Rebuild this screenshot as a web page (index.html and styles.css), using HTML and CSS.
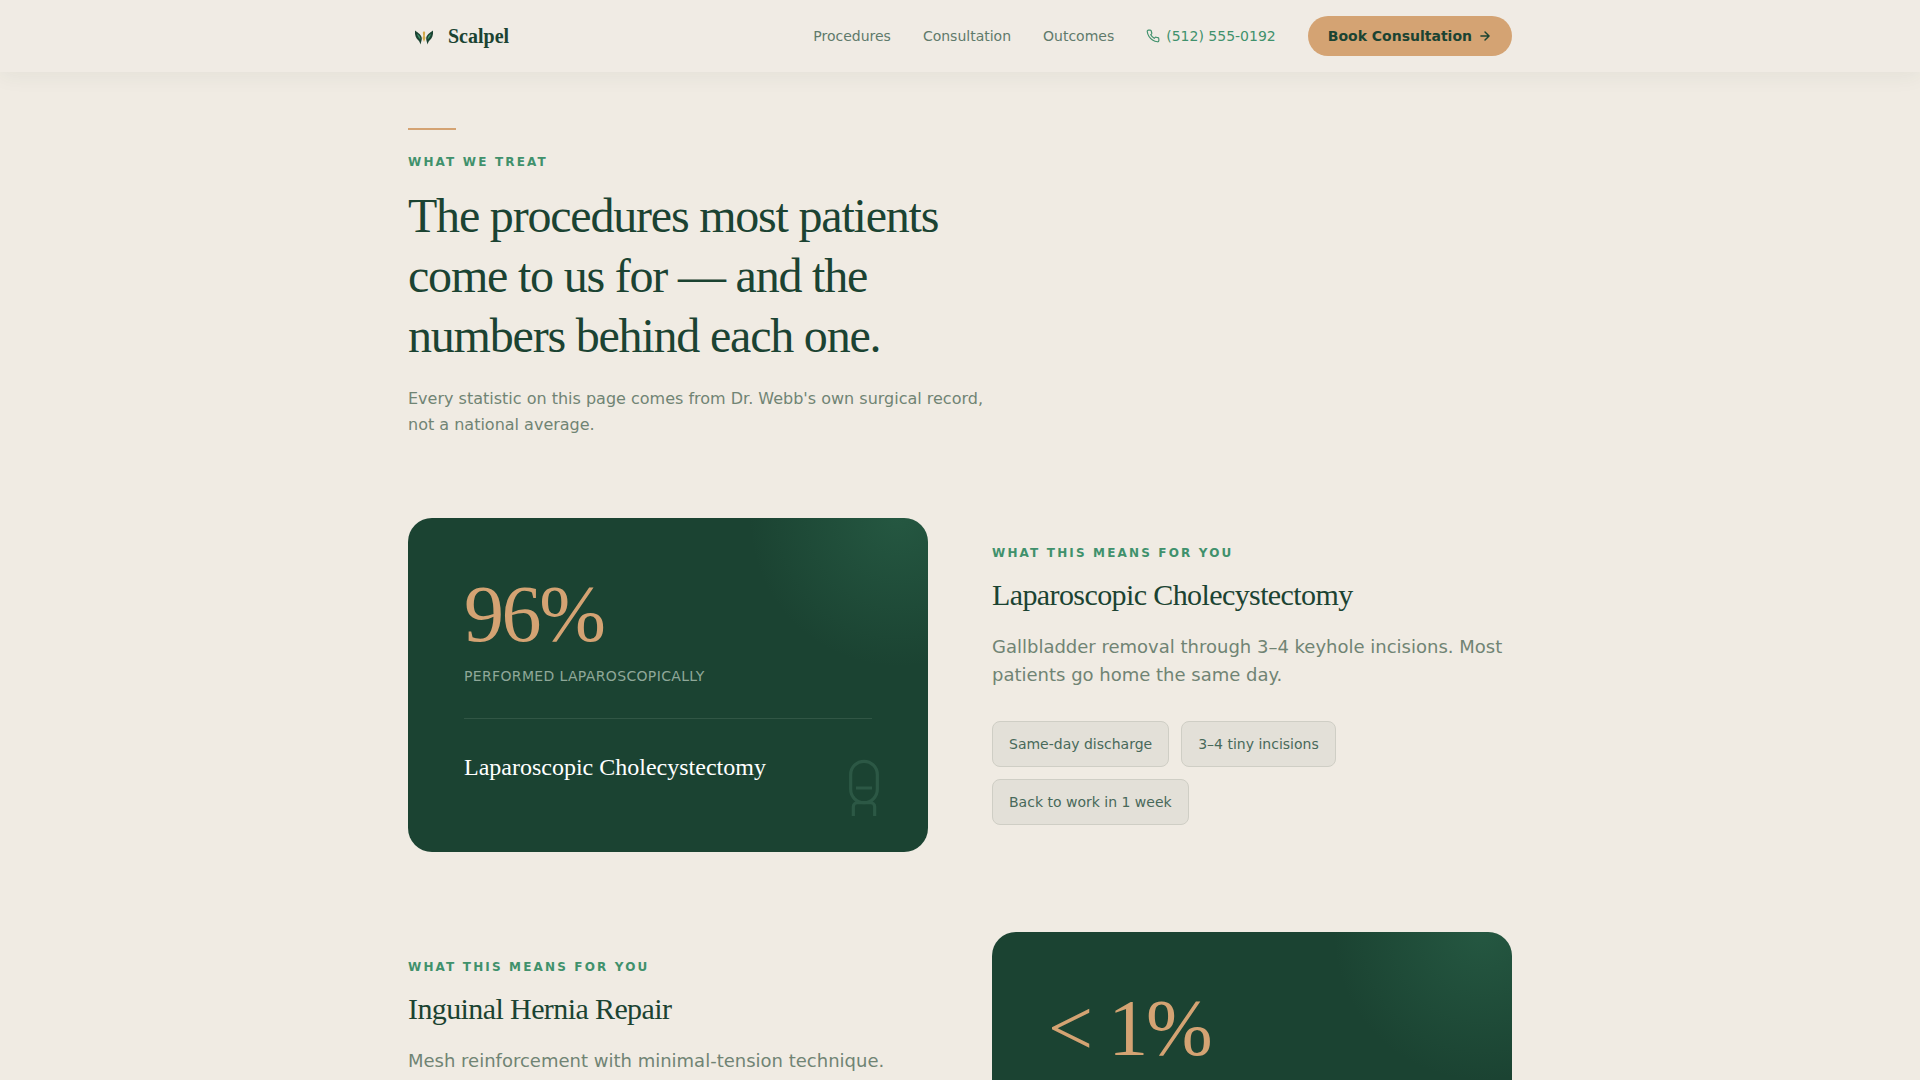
FILE: index.html
```html
<!DOCTYPE html>
<html lang="en">
<head>
    <meta charset="UTF-8">
    <meta name="viewport" content="width=device-width, initial-scale=1.0">
    <title>Scalpel</title>
    <link rel="stylesheet" href="styles.css">
</head>
<body>

<header class="site-header">
    <div class="container header-inner">
        <a href="#" class="logo">
            <svg class="logo-mark" viewBox="0 0 32 32" aria-hidden="true">
                <path fill="#1b4332" d="M7 10.500c3.500 2.500 6.500 4.500 6.800 7.500c.2 2-.8 4-1.300 6.500c-.6-2-1-3-2-4C8 18.500 6.500 15 7 10.500z"/>
                <path fill="#1b4332" d="M25 10.500c-3.500 2.500-6.500 4.500-6.800 7.500c-.2 2 .8 4 1.300 6.500c.6-2 1-3 2-4C24 18.500 25.500 15 25 10.500z"/>
                <path fill="#40916c" d="M9 14c2 1 3.500 2.500 3.500 5.500c-1.500-1-2.800-3-3.500-5.500zM23 14c-2 1-3.500 2.500-3.500 5.500c1.500-1 2.800-3 3.500-5.500z"/>
                <path fill="#d4a949" d="M16 11l1.200 1.500l-.4 3.500l.7 2l-1.500 4l-1.500-4l.7-2l-.4-3.500z"/>
            </svg>
            <span>Scalpel</span>
        </a>
        <nav class="nav">
            <a href="#procedures">Procedures</a>
            <a href="#consultation">Consultation</a>
            <a href="#outcomes">Outcomes</a>
            <a href="tel:5125550192" class="phone">
                <svg viewBox="0 0 24 24" aria-hidden="true">
                    <path d="M22 16.920v3a2 2 0 0 1-2.180 2 19.790 19.790 0 0 1-8.630-3.070 19.500 19.500 0 0 1-6-6 19.790 19.790 0 0 1-3.070-8.670A2 2 0 0 1 4.110 2h3a2 2 0 0 1 2 1.720 12.840 12.840 0 0 0 .7 2.810 2 2 0 0 1-.45 2.110L8.090 9.910a16 16 0 0 0 6 6l1.270-1.270a2 2 0 0 1 2.110-.45 12.840 12.840 0 0 0 2.810.7A2 2 0 0 1 22 16.920z"/>
                </svg>
                <span>(512) 555-0192</span>
            </a>
            <button type="button" class="btn">
                Book Consultation
                <svg viewBox="0 0 24 24" aria-hidden="true"><path d="M5 12h14M12 5l7 7-7 7"/></svg>
            </button>
        </nav>
    </div>
</header>

<main class="container" id="procedures">
    <section class="intro">
        <div class="rule"></div>
        <p class="eyebrow">What we treat</p>
        <h1>The procedures most patients come to us for — and the numbers behind each one.</h1>
        <p class="lead">Every statistic on this page comes from Dr. Webb's own surgical record, not a national average.</p>
    </section>

    <section class="procedure">
        <div class="stat-card">
            <div class="stat">96%</div>
            <div class="stat-label">Performed laparoscopically</div>
            <div class="stat-name">Laparoscopic Cholecystectomy</div>
            <svg class="stat-icon" viewBox="0 0 24 24" aria-hidden="true">
                <path d="M12 2a5 5 0 0 0-5 5v5.500a5 5 0 0 0 10 0V7a5 5 0 0 0-5-5z"/>
                <path d="M9 12h6M8 22.500v-3.500a1.500 1.500 0 0 1 1.500-1.500h5A1.500 1.500 0 0 1 16 19v3.500"/>
            </svg>
        </div>
        <div class="detail">
            <p class="eyebrow">What this means for you</p>
            <h2>Laparoscopic Cholecystectomy</h2>
            <p class="desc">Gallbladder removal through 3–4 keyhole incisions. Most patients go home the same day.</p>
            <ul class="tags">
                <li>Same-day discharge</li>
                <li>3–4 tiny incisions</li>
                <li>Back to work in 1 week</li>
            </ul>
        </div>
    </section>

    <section class="procedure reverse">
        <div class="stat-card">
            <div class="stat">&lt; 1%</div>
            <div class="stat-label">Recurrence rate</div>
            <div class="stat-name">Inguinal Hernia Repair</div>
        </div>
        <div class="detail">
            <p class="eyebrow">What this means for you</p>
            <h2>Inguinal Hernia Repair</h2>
            <p class="desc">Mesh reinforcement with minimal-tension technique. Recovery in days, not weeks.</p>
            <ul class="tags">
                <li>Same-day discharge</li>
                <li>Minimal tension</li>
                <li>Light activity in days</li>
            </ul>
        </div>
    </section>
</main>

</body>
</html>
```
FILE: styles.css
```css
* {
    box-sizing: border-box;
}
body {
    margin: 0;
    background-color: #f0ebe3;
    color: #1b4332;
    font-family: "DejaVu Sans", sans-serif;
    font-size: 16px;
}
h1, h2, p, ul {
    margin: 0;
    padding: 0;
}
a {
    color: inherit;
    text-decoration: none;
}
.container {
    max-width: 1200px;
    margin: 0 auto;
    padding: 0 48px;
}

/* Header */
.site-header {
    position: sticky;
    top: 0;
    z-index: 10;
    background-color: #f0ebe4;
    box-shadow: 0 4px 20px rgba(27, 67, 50, 0.06);
}
.header-inner {
    display: flex;
    align-items: center;
    justify-content: space-between;
    height: 72px;
}
.logo {
    display: flex;
    align-items: center;
    gap: 8px;
    font-family: "Liberation Serif", serif;
    font-size: 20px;
    font-weight: bold;
}
.logo-mark {
    width: 32px;
    height: 32px;
}
.nav {
    display: flex;
    align-items: center;
    gap: 32px;
    font-size: 14px;
    color: #5f7a6b;
}
.phone {
    display: flex;
    align-items: center;
    gap: 6px;
    color: #40916c;
}
.phone svg,
.btn svg {
    width: 14px;
    height: 14px;
    fill: none;
    stroke: currentColor;
    stroke-width: 2;
    stroke-linecap: round;
    stroke-linejoin: round;
}
.btn {
    display: flex;
    align-items: center;
    gap: 6px;
    height: 40px;
    padding: 0 20px;
    border: none;
    border-radius: 20px;
    background-color: #d4a373;
    color: #1b4332;
    font-family: inherit;
    font-size: 14px;
    font-weight: bold;
    cursor: pointer;
}
.btn svg {
    stroke-width: 2.5;
}

/* Intro */
.intro {
    max-width: 600px;
    padding: 56px 0 80px;
}
.rule {
    width: 48px;
    height: 2px;
    margin-bottom: 24px;
    background-color: #d4a373;
}
.eyebrow {
    margin-bottom: 16px;
    color: #40916c;
    font-size: 12px;
    font-weight: bold;
    line-height: 16px;
    letter-spacing: 0.18em;
    text-transform: uppercase;
}
h1, h2 {
    font-family: "Liberation Serif", serif;
    font-weight: normal;
}
h1 {
    margin-bottom: 20px;
    font-size: 48px;
    line-height: 60px;
    letter-spacing: -0.025em;
}
.lead {
    color: #708474;
    line-height: 26px;
}

/* Procedures */
.procedure {
    display: grid;
    grid-template-columns: 1fr 1fr;
    gap: 64px;
    align-items: center;
    margin-bottom: 80px;
}
.reverse .stat-card {
    order: 2;
}
.stat-card {
    position: relative;
    overflow: hidden;
    padding: 56px 56px 69px;
    border-radius: 24px;
    background-color: #1b4332;
}
.stat-card::before {
    content: "";
    position: absolute;
    top: -150px;
    right: -120px;
    width: 300px;
    height: 300px;
    background: radial-gradient(circle, rgba(64, 145, 108, 0.26), transparent 70%);
}
.stat {
    color: #d4a373;
    font-family: "Liberation Serif", serif;
    font-size: 80px;
    line-height: 80px;
    letter-spacing: -0.03em;
}
.stat-label {
    margin-top: 12px;
    padding-bottom: 32px;
    border-bottom: 1px solid #315645;
    color: #8fa899;
    font-size: 14px;
    line-height: 20px;
    letter-spacing: 0.025em;
    text-transform: uppercase;
}
.stat-name {
    margin-top: 32px;
    color: #fff;
    font-family: "Liberation Serif", serif;
    font-size: 24px;
    line-height: 32px;
}
.stat-icon {
    position: absolute;
    right: 32px;
    bottom: 32px;
    width: 64px;
    height: 64px;
    fill: none;
    stroke: #2c5845;
    stroke-width: 1.2;
}
h2 {
    margin-bottom: 20px;
    font-size: 30px;
    line-height: 36px;
    letter-spacing: -0.02em;
}
.desc {
    margin-bottom: 32px;
    color: #708474;
    font-size: 18px;
    line-height: 28px;
}
.tags {
    display: flex;
    flex-wrap: wrap;
    gap: 12px;
    list-style: none;
}
.tags li {
    padding: 12px 16px;
    border: 1px solid #cfcec5;
    border-radius: 8px;
    background-color: #e3e0d8;
    color: #48695a;
    font-size: 14px;
    line-height: 20px;
}
```
